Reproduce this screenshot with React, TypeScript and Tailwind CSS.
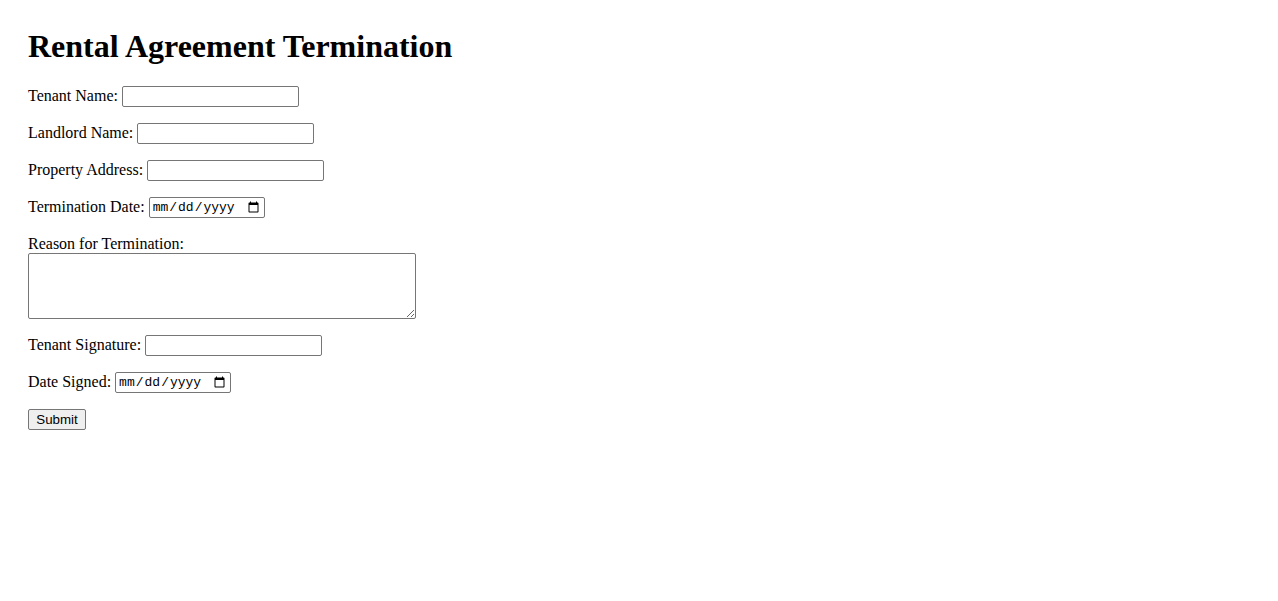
import React from 'react';

const serif = { fontFamily: '"Liberation Serif", "Times New Roman", serif' };

const textInput =
  'h-[21px] w-[177px] border border-[#767676] rounded-[2px] bg-white px-[2px] text-[13.33px] text-black outline-none';
const dateInput =
  'h-[21px] w-[116px] border border-[#767676] rounded-[2px] bg-white pl-[2px] pr-[2px] text-[13px] text-black outline-none font-["Liberation_Mono",monospace]';

const Row = ({ label, children }: { label: string; children: React.ReactNode }) => (
  <div className="flex items-center h-[21px]">
    <label className="text-base leading-[18px] mr-[4px] -mt-[1px]">{label}</label>
    {children}
  </div>
);

export default function App() {
  return (
    <div className="min-h-screen bg-white text-black pl-[28px] pt-[28px]" style={serif}>
      <h1 className="text-[32px] font-bold leading-[37px] mb-[21px]">Rental Agreement Termination</h1>
      <form className="flex flex-col gap-[16px]" onSubmit={(e) => e.preventDefault()}>
        <Row label="Tenant Name:">
          <input type="text" className={textInput} />
        </Row>
        <Row label="Landlord Name:">
          <input type="text" className={textInput} />
        </Row>
        <Row label="Property Address:">
          <input type="text" className={textInput} />
        </Row>
        <Row label="Termination Date:">
          <input type="date" className={dateInput} />
        </Row>
        <div className="flex flex-col">
          <label className="text-base leading-[19px]">Reason for Termination:</label>
          <textarea className="h-[66px] w-[388px] border border-[#767676] rounded-[2px] bg-white p-[2px] text-[13px] outline-none resize" />
        </div>
        <Row label="Tenant Signature:">
          <input type="text" className={textInput} />
        </Row>
        <Row label="Date Signed:">
          <input type="date" className={dateInput} />
        </Row>
        <div className="flex">
          <button
            type="submit"
            className="h-[21px] w-[58px] border border-[#767676] rounded-[2px] bg-[#efefef] text-[13.33px] text-black leading-none"
            style={{ fontFamily: '"Liberation Sans", Arial, sans-serif' }}
          >
            Submit
          </button>
        </div>
      </form>
    </div>
  );
}
